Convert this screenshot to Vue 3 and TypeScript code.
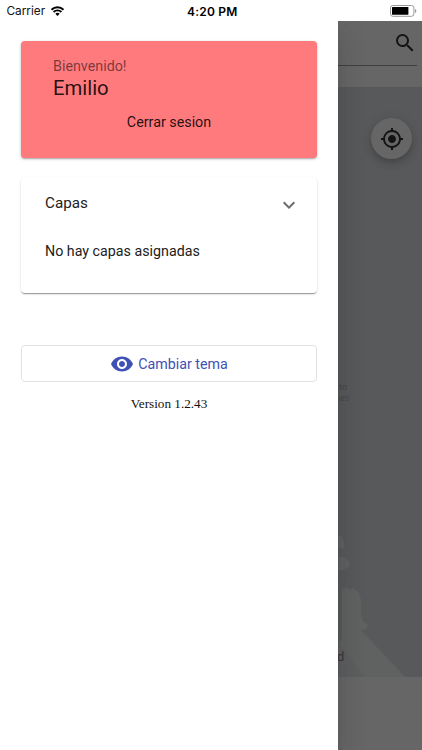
<script setup lang="ts">
import { ref } from 'vue'

const userName = ref('Emilio')
const version = '1.2.43'
</script>

<template>
  <div class="screen">
    <header class="status">
      <div class="carrier">
        <span>Carrier</span>
        <svg class="wifi" viewBox="0 0 14 10">
          <path d="M1 3.7a8.7 8.7 0 0 1 12 0" />
          <path d="M3.1 6a5.6 5.6 0 0 1 7.8 0" />
          <path class="dot" d="M7 10 4.8 7.8a3.2 3.2 0 0 1 4.4 0z" />
        </svg>
      </div>
      <div class="clock">4:20 PM</div>
      <div class="power">
        <svg class="battery" viewBox="0 0 27 12">
          <rect x=".5" y=".5" width="23.4" height="10.8" rx="2.4" fill="#fff" stroke="#999" />
          <rect x="2" y="2" width="16.4" height="7.8" rx=".6" fill="#000" />
          <path d="M25 4v4c1.8-.6 1.8-3.4 0-4z" fill="#999" />
        </svg>
      </div>
    </header>

    <div class="body">
      <aside class="drawer">
        <section class="welcome">
          <div class="hello">Bienvenido!</div>
          <div class="name">{{ userName }}</div>
          <div class="logout">Cerrar sesion</div>
        </section>

        <section class="layers">
          <div class="layers-head">
            <span>Capas</span>
            <svg class="chevron" viewBox="0 0 24 24">
              <path d="M16.59 8.59 12 13.17 7.41 8.59 6 10l6 6 6-6z" />
            </svg>
          </div>
          <div class="empty">No hay capas asignadas</div>
        </section>

        <button class="theme">
          <svg class="eye" viewBox="0 0 24 24">
            <path d="M12 4.5C7 4.5 2.73 7.61 1 12c1.73 4.39 6 7.5 11 7.5s9.27-3.11 11-7.5c-1.73-4.39-6-7.5-11-7.5zM12 17c-2.76 0-5-2.24-5-5s2.24-5 5-5 5 2.24 5 5-2.24 5-5 5zm0-8c-1.66 0-3 1.34-3 3s1.34 3 3 3 3-1.34 3-3-1.34-3-3-3z" />
          </svg>
          <span>Cambiar tema</span>
        </button>
        <div class="version">Version {{ version }}</div>
      </aside>

      <main class="backdrop">
        <div class="search">
          <svg class="lens" viewBox="0 0 24 24">
            <path d="M15.5 14h-.79l-.28-.27A6.471 6.471 0 0 0 16 9.5 6.5 6.5 0 1 0 9.5 16c1.61 0 3.09-.59 4.23-1.57l.27.28v.79l5 4.99L20.49 19l-4.99-5zm-6 0C7.01 14 5 11.99 5 9.5S7.01 5 9.5 5 14 7.01 14 9.5 11.99 14 9.5 14z" />
          </svg>
        </div>
        <div class="map">
          <svg class="land" viewBox="0 0 84 590">
            <path d="M0 448c4 1 6 5 6 8s2 5 0 6l-6-1zM0 470c6-1 10 2 12 6-1 5-5 8-12 7z" fill="#5f6061" />
            <path d="M4 502l5-2 2 3 4-2 6 5 2 7v15l2 6 5 4-3 5-5-1 45 48H0v-34l4-4z" fill="#606161" />
            <path d="M0 554l26 36H0z" fill="#5d5e5f" />
          </svg>
          <div class="place upper">to</div>
          <div class="place lower">nes</div>
          <div class="place city">d</div>
          <div class="locate">
            <svg viewBox="0 0 24 24">
              <path d="M12 8c-2.21 0-4 1.79-4 4s1.79 4 4 4 4-1.79 4-4-1.79-4-4-4zm8.94 3A8.994 8.994 0 0 0 13 3.06V1h-2v2.06A8.994 8.994 0 0 0 3.06 11H1v2h2.06A8.994 8.994 0 0 0 11 20.94V23h2v-2.06A8.994 8.994 0 0 0 20.94 13H23v-2h-2.06zM12 19c-3.87 0-7-3.13-7-7s3.13-7 7-7 7 3.13 7 7-3.13 7-7 7z" />
            </svg>
          </div>
        </div>
        <div class="panel"></div>
      </main>
    </div>
  </div>
</template>

<style>
body {
  background: #fff;
}
</style>

<style scoped>
.screen {
  box-sizing: border-box;
  width: 422px;
  height: 750px;
  overflow: hidden;
  display: flex;
  flex-direction: column;
  background: #fff;
  font-family: Roboto, "Liberation Sans", sans-serif;
  color: #212121;
}
.screen *,
.screen svg {
  box-sizing: border-box;
}
svg {
  display: block;
  flex: none;
}
.status {
  flex: none;
  height: 21px;
  display: grid;
  grid-template-columns: 1fr auto 1fr;
  align-items: center;
  padding: 0 5px 0 6.5px;
  font: 12.5px/21px Inter, sans-serif;
  color: #111;
}
.carrier {
  display: flex;
  align-items: center;
  gap: 5px;
  font-size: 11.8px;
  line-height: 22px;
}
.wifi {
  width: 15px;
  height: 10px;
  fill: none;
  stroke: #000;
  stroke-width: 1.9;
}
.wifi .dot {
  fill: #000;
  stroke: none;
}
.clock {
  padding-left: 1px;
  font-weight: 600;
  color: #000;
  font-size: 12px;
  letter-spacing: 0.2px;
}
.power {
  display: flex;
  justify-content: flex-end;
}
.battery {
  width: 27px;
  height: 12px;
}
.body {
  flex: 1;
  min-height: 0;
  display: flex;
}
.drawer {
  position: relative;
  z-index: 1;
  flex: none;
  width: 338px;
  padding: 20px 21px 0;
  display: flex;
  flex-direction: column;
  background: #fff;
  clip-path: inset(0 -60px 0 0);
  box-shadow: 0 8px 10px -5px rgba(0, 0, 0, 0.1), 0 16px 24px 2px rgba(0, 0, 0, 0.07),
    0 6px 30px 5px rgba(0, 0, 0, 0.06);
}
.welcome {
  height: 117px;
  padding: 16px 32px 0;
  border-radius: 4px;
  background: #ff7a7d;
  box-shadow: 0 1px 3px rgba(0, 0, 0, 0.25), 0 1px 1px rgba(0, 0, 0, 0.15);
}
.hello {
  font-size: 14.3px;
  line-height: 19px;
  color: rgba(0, 0, 0, 0.54);
}
.name {
  font-size: 20.3px;
  line-height: 24px;
  color: rgba(0, 0, 0, 0.87);
}
.logout {
  margin-top: 13px;
  font-size: 14.3px;
  line-height: 19px;
  text-align: center;
  color: rgba(0, 0, 0, 0.87);
}
.layers {
  margin-top: 20px;
  height: 115px;
  padding: 13px 16px 0 24px;
  border-radius: 4px;
  background: #fff;
  box-shadow: 0 2px 1px -1px rgba(0, 0, 0, 0.25), 0 1px 1px rgba(0, 0, 0, 0.14),
    0 1px 3px rgba(0, 0, 0, 0.12);
}
.layers-head {
  display: flex;
  justify-content: space-between;
  align-items: center;
  height: 24px;
  font-size: 15.2px;
}
.chevron {
  width: 24px;
  height: 24px;
  margin-top: 4px;
  fill: #6c6c6c;
}
.empty {
  margin-top: 26px;
  font-size: 14.25px;
  line-height: 21px;
}
.theme {
  margin-top: 52px;
  height: 37px;
  padding: 0;
  display: flex;
  align-items: center;
  justify-content: center;
  gap: 4px;
  border: 1px solid #e2e2e2;
  border-radius: 4px;
  background: #fff;
  color: #3f51b5;
  font-family: inherit;
  font-size: 14.25px;
}
.eye {
  width: 24px;
  height: 24px;
  fill: #3f51b5;
}
.version {
  margin-top: 12px;
  text-align: center;
  font: 13.2px/20px "Liberation Serif", serif;
  color: #111;
}
.backdrop {
  flex: 1;
  min-width: 0;
  display: flex;
  flex-direction: column;
}
.search {
  flex: none;
  height: 66px;
  padding: 0 5px 21px 0;
  background: #666;
  display: flex;
  justify-content: flex-end;
  align-items: stretch;
}
.search::before {
  content: "";
  flex: 1;
  margin-right: -24px;
  border-bottom: 1px solid #3f3f3f;
}
.lens {
  width: 24px;
  height: 24px;
  margin-top: 9.5px;
  fill: #141414;
}
.map {
  position: relative;
  flex: none;
  height: 590px;
  background: #58595b;
}
.land {
  width: 84px;
  height: 590px;
}
.place {
  position: absolute;
  left: 0;
  font: 8.5px/10px "Noto Sans", sans-serif;
  color: #47484a;
}
.upper {
  top: 295px;
  left: 1px;
}
.lower {
  top: 306px;
  left: -3px;
}
.city {
  top: 563px;
  left: -1px;
  font-size: 12px;
  line-height: 14px;
  color: #353637;
}
.locate {
  position: absolute;
  top: 31px;
  right: 10px;
  width: 41px;
  height: 41px;
  border-radius: 50%;
  background: #666;
  display: flex;
  align-items: center;
  justify-content: center;
  box-shadow: 0 3px 5px -1px rgba(0, 0, 0, 0.12), 0 5px 9px rgba(0, 0, 0, 0.1),
    0 1px 13px rgba(0, 0, 0, 0.08);
}
.locate svg {
  width: 24px;
  height: 24px;
  fill: #141414;
}
.panel {
  flex: 1;
  background: #666;
}
</style>
